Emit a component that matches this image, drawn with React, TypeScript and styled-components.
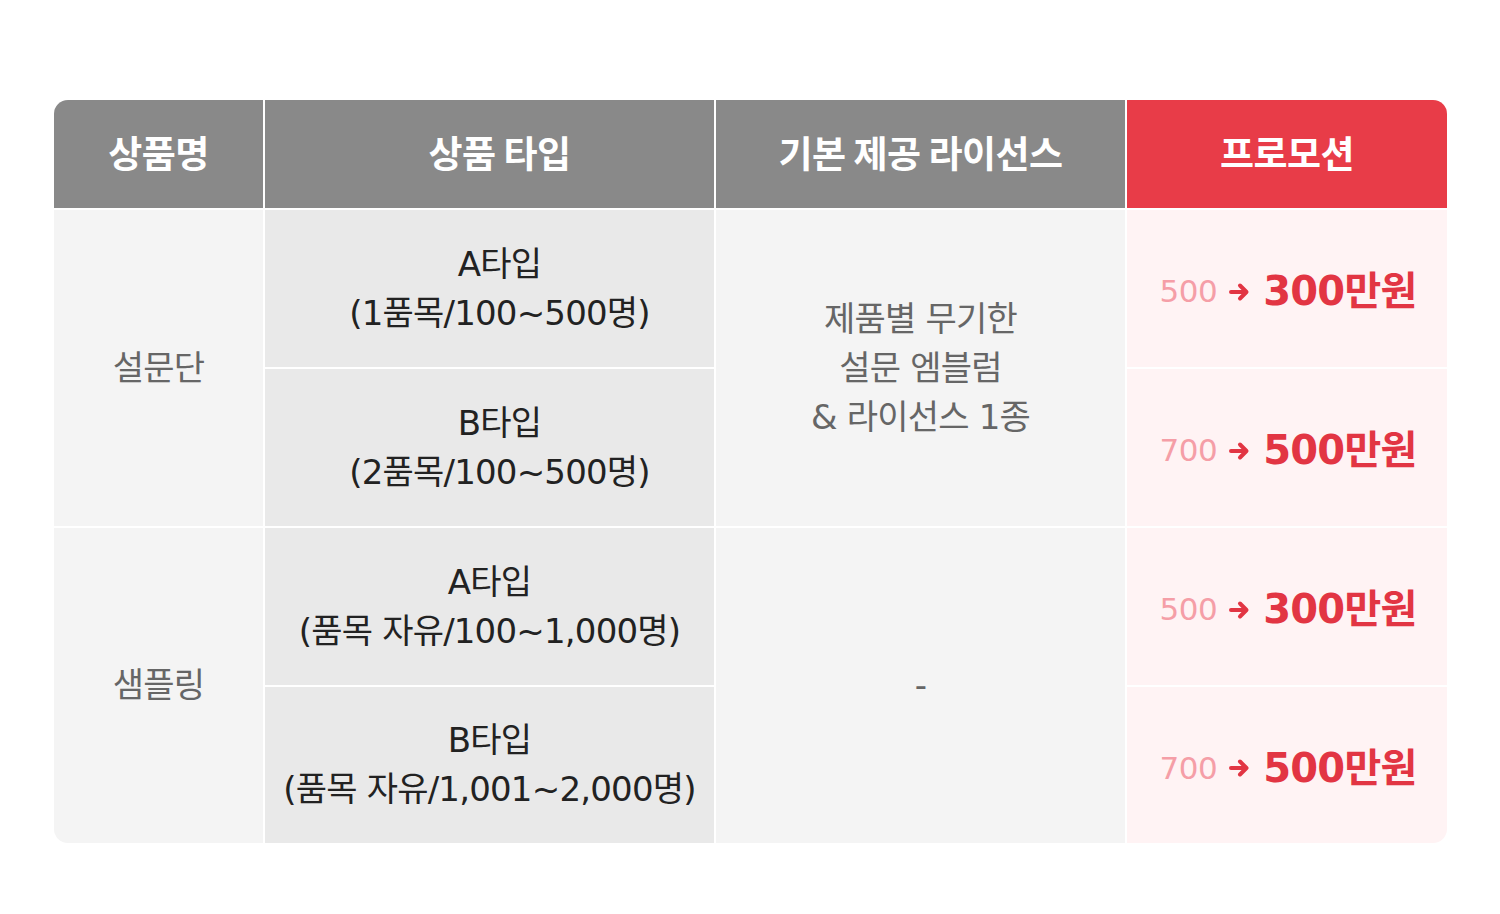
import React from "react";
import styled, { createGlobalStyle } from "styled-components";

const Global = createGlobalStyle`
  html, body { margin: 0; padding: 0; background: #ffffff; }
  body { font-family: "Noto Sans CJK KR", "Noto Sans", sans-serif; }
`;

const LATIN = `"DejaVu Sans", "Noto Sans CJK KR", sans-serif`;

const Page = styled.div`
  width: 1500px;
  height: 914px;
  box-sizing: border-box;
  padding: 100px 53px 0 54px;
`;

const Table = styled.div`
  display: grid;
  grid-template-columns: 209px 449px 409px 320px;
  grid-template-rows: 108px 157px 157px 157px 156px;
  gap: 2px;
  background: #ffffff;
  border-radius: 14px;
  overflow: hidden;
  width: 1393px;
`;

const Head = styled.div<{ $promo?: boolean; $shift?: number }>`
  display: flex;
  align-items: center;
  justify-content: center;
  padding-left: ${(p) => (p.$shift ?? 0) * 2}px;
  padding-bottom: 4px;
  background: ${(p) => (p.$promo ? "#e83c48" : "#898989")};
  color: #ffffff;
  font-size: 37px;
  font-weight: 700;
  letter-spacing: -0.5px;
`;

const Cell = styled.div<{ $bg: string; $color: string; $span?: number; $col: number; $row: number; $shift?: number }>`
  grid-column: ${(p) => p.$col};
  grid-row: ${(p) => p.$row} / span ${(p) => p.$span ?? 1};
  display: flex;
  flex-direction: column;
  align-items: center;
  justify-content: center;
  padding-left: ${(p) => (p.$shift ?? 0) * 2}px;
  text-align: center;
  background: ${(p) => p.$bg};
  color: ${(p) => p.$color};
  font-family: ${LATIN};
  font-size: 34px;
  font-weight: 400;
  line-height: 49px;
  letter-spacing: -0.8px;
`;

const Price = styled.div`
  display: flex;
  align-items: center;
  gap: 12px;
  color: #e23543;
  padding-left: 2px;
  padding-top: 6px;
`;

const Old = styled.span`
  font-size: 31px;
  color: #f59ea7;
  font-weight: 400;
  letter-spacing: -0.5px;
`;

const New = styled.span`
  font-size: 40px;
  font-weight: 700;
  letter-spacing: -0.8px;
`;

const Arrow = () => (
  <svg width="22" height="20" viewBox="0 0 22 20">
    <path d="M2 10 H17 M11 3.5 L17.5 10 L11 16.5" stroke="#e23543" strokeWidth="4" fill="none" strokeLinecap="round" strokeLinejoin="round" />
  </svg>
);

const PriceCell = ({ row, from, to }: { row: number; from: string; to: string }) => (
  <Cell $col={4} $row={row} $bg="#fff3f4" $color="#e23543">
    <Price>
      <Old>{from}</Old>
      <Arrow />
      <New>{to}</New>
    </Price>
  </Cell>
);

export default function App() {
  return (
    <Page>
      <Global />
      <Table>
        <Head>상품명</Head>
        <Head $shift={10}>상품 타입</Head>
        <Head>기본 제공 라이선스</Head>
        <Head $promo>프로모션</Head>

        <Cell $col={1} $row={2} $span={2} $bg="#f4f4f4" $color="#666666">설문단</Cell>
        <Cell $col={2} $row={2} $shift={10} $bg="#e9e9e9" $color="#222222">
          <div>A타입</div>
          <div>(1품목/100~500명)</div>
        </Cell>
        <Cell $col={3} $row={2} $span={2} $bg="#f4f4f4" $color="#666666">
          <div>제품별 무기한</div>
          <div>설문 엠블럼</div>
          <div>&amp; 라이선스 1종</div>
        </Cell>
        <PriceCell row={2} from="500" to="300만원" />

        <Cell $col={2} $row={3} $shift={10} $bg="#e9e9e9" $color="#222222">
          <div>B타입</div>
          <div>(2품목/100~500명)</div>
        </Cell>
        <PriceCell row={3} from="700" to="500만원" />

        <Cell $col={1} $row={4} $span={2} $bg="#f4f4f4" $color="#666666">샘플링</Cell>
        <Cell $col={2} $row={4} $bg="#e9e9e9" $color="#222222">
          <div>A타입</div>
          <div>(품목 자유/100~1,000명)</div>
        </Cell>
        <Cell $col={3} $row={4} $span={2} $bg="#f4f4f4" $color="#666666">-</Cell>
        <PriceCell row={4} from="500" to="300만원" />

        <Cell $col={2} $row={5} $bg="#e9e9e9" $color="#222222">
          <div>B타입</div>
          <div>(품목 자유/1,001~2,000명)</div>
        </Cell>
        <PriceCell row={5} from="700" to="500만원" />
      </Table>
    </Page>
  );
}
